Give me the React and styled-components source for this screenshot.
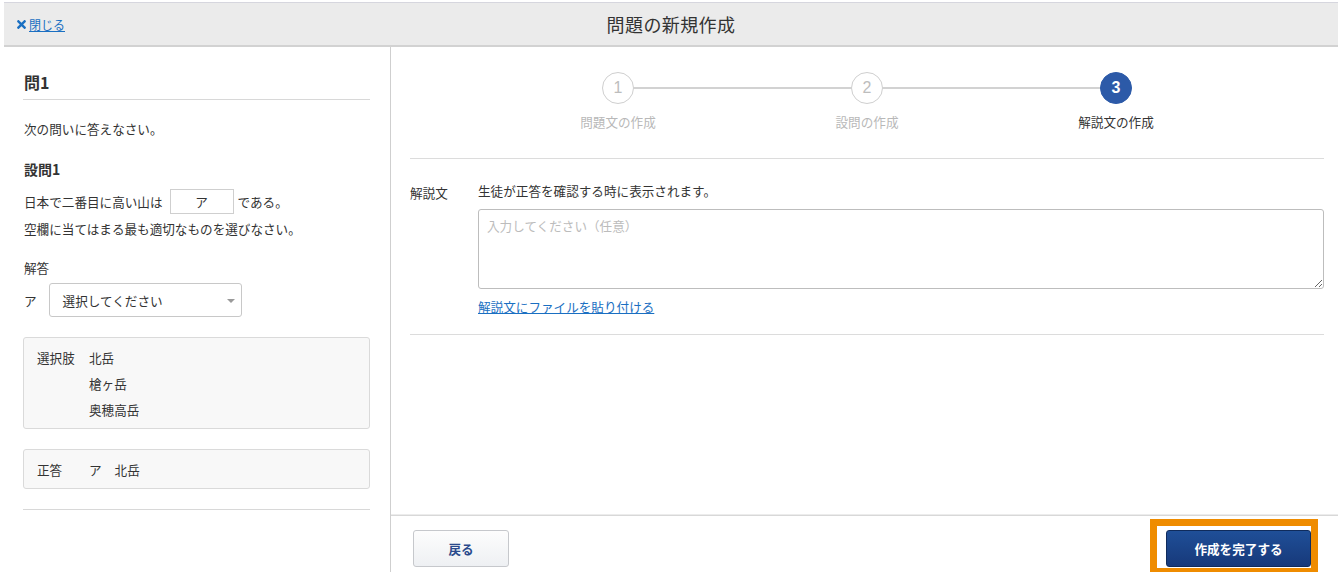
import React from "react";
import styled, { createGlobalStyle } from "styled-components";
import { FaTimes } from "react-icons/fa";

const GlobalStyle = createGlobalStyle`
  html, body {
    margin: 0;
    padding: 0;
    background: #fff;
  }
  body {
    font-family: "Noto Sans CJK JP", "Noto Sans", sans-serif;
    color: #333;
    font-size: 12.6px;
  }
`;

const Page = styled.div`
  padding: 2px 0 0 4px;
  width: 1338px;
  box-sizing: border-box;
`;

const Header = styled.header`
  display: grid;
  grid-template-columns: 1fr auto 1fr;
  align-items: center;
  height: 42px;
  background: #ebebeb;
  border-top: 1px solid #d6d6de;
  border-bottom: 2px solid #d2d2d2;
  padding: 0 12px;
`;

const CloseLink = styled.a`
  display: inline-flex;
  align-items: center;
  gap: 2px;
  color: #1a6fc2;
  font-size: 12px;
  text-decoration: underline;
  cursor: pointer;
  justify-self: start;

  svg {
    width: 11px;
    height: 13px;
  }
`;

const Title = styled.h1`
  margin: 0;
  font-size: 18px;
  font-weight: 400;
  color: #333;
  letter-spacing: 0.4px;
`;

const Main = styled.div`
  display: flex;
  height: 525px;
`;

const LeftPane = styled.aside`
  width: 347px;
  padding: 0 20px 0 19px;
  border-right: 1px solid #cfcfcf;
  flex-shrink: 0;
`;

const QTitle = styled.h2`
  margin: 23px 0 0;
  font-size: 16px;
  line-height: 24px;
  font-weight: 700;
  padding: 0 0 5px 1px;
  border-bottom: 1px solid #d8d8d8;
`;

const Text = styled.p`
  margin: ${(p) => p.$mt || 0}px 0 0 1px;
  line-height: 20px;
`;

const SubTitle = styled.h3`
  margin: 20px 0 0 1px;
  font-size: 14px;
  line-height: 20px;
  font-weight: 700;
`;

const QuestionLine = styled.div`
  display: flex;
  align-items: center;
  margin: 10px 0 0 1px;
  height: 25px;
`;

const Blank = styled.span`
  display: inline-flex;
  align-items: center;
  justify-content: center;
  width: 62px;
  height: 23px;
  border: 1px solid #cfcfcf;
  margin: 0 4px 0 7px;
`;

const SelectRow = styled.div`
  display: flex;
  align-items: center;
  margin: 5px 0 0 1px;
  gap: 12px;
`;

const SelectBox = styled.div`
  position: relative;
  height: 32px;
  width: 178px;
  border: 1px solid #c8c8c8;
  border-radius: 3px;
  display: flex;
  align-items: center;
  padding-left: 13px;

  &::after {
    content: "";
    position: absolute;
    right: 6px;
    top: 15px;
    border-left: 4px solid transparent;
    border-right: 4px solid transparent;
    border-top: 4px solid #9a9a9a;
  }
`;

const InfoBox = styled.div`
  margin-top: 20px;
  background: #f8f8f8;
  border: 1px solid #dadada;
  border-radius: 3px;
  padding: 7px 13px 5px;
`;

const InfoRow = styled.div`
  display: flex;
  line-height: 26px;
`;

const InfoLabel = styled.span`
  width: 52px;
  flex-shrink: 0;
`;

const InfoValue = styled.span`
  margin-right: ${(p) => p.$gap || 0}px;
`;

const Rule = styled.hr`
  margin: 20px 0 0;
  border: 0;
  border-top: 1px solid #d8d8d8;
`;

const RightPane = styled.section`
  flex: 1;
  display: flex;
  flex-direction: column;
`;

const Content = styled.div`
  flex: 1;
  padding: 0 14px 0 19px;
`;

const Stepper = styled.ol`
  list-style: none;
  margin: 0;
  padding: 25px 0 27px;
  display: grid;
  grid-template-columns: repeat(3, 249px);
  justify-content: center;
  border-bottom: 1px solid #dcdcdc;
`;

const Step = styled.li`
  position: relative;
  display: flex;
  flex-direction: column;
  align-items: center;
  gap: 9px;

  &:not(:last-child)::after {
    content: "";
    position: absolute;
    left: 50%;
    width: 100%;
    top: 15px;
    height: 2px;
    background: #d2d2d2;
  }
`;

const Circle = styled.span`
  position: relative;
  z-index: 1;
  width: 30px;
  height: 30px;
  border-radius: 50%;
  display: flex;
  align-items: center;
  justify-content: center;
  font-family: "Liberation Sans", Arial, sans-serif;
  font-size: 16px;
  font-weight: ${(p) => (p.$active ? 700 : 400)};
  background: ${(p) => (p.$active ? "#2c5aa8" : "#fff")};
  color: ${(p) => (p.$active ? "#fff" : "#bdbdbd")};
  border: 1px solid ${(p) => (p.$active ? "#2c5aa8" : "#cfcfcf")};
`;

const StepLabel = styled.span`
  line-height: 18px;
  color: ${(p) => (p.$active ? "#333" : "#b8b8b8")};
`;

const FormRow = styled.div`
  display: flex;
  padding: 23px 0 18px;
  border-bottom: 1px solid #dcdcdc;
`;

const FormLabel = styled.div`
  width: 68px;
  flex-shrink: 0;
  line-height: 18px;
  padding-top: 2px;
`;

const FormBody = styled.div`
  flex: 1;
  display: flex;
  flex-direction: column;
`;

const Hint = styled.div`
  line-height: 18px;
`;

const TextArea = styled.textarea`
  margin-top: 9px;
  height: 80px;
  box-sizing: border-box;
  border: 1px solid #bdbdbd;
  border-radius: 3px;
  padding: 6px 8px;
  font-family: inherit;
  font-size: 12.6px;
  color: #333;
  resize: vertical;

  &::placeholder {
    color: #bcbcbc;
  }
`;

const FileLink = styled.a`
  margin-top: 9px;
  line-height: 18px;
  color: #1a6fc2;
  text-decoration: underline;
  align-self: flex-start;
  cursor: pointer;
`;

const Footer = styled.footer`
  display: flex;
  justify-content: space-between;
  align-items: flex-start;
  height: 57px;
  box-sizing: border-box;
  padding: 14px 27px 0 22px;
  border-top: 1px solid #d8d8d8;
  box-shadow: 0 -1px 0 #ececec;
`;

const Button = styled.button`
  height: 37px;
  border-radius: 3px;
  font-family: inherit;
  font-size: 12.6px;
  font-weight: 700;
  cursor: pointer;
  background: ${(p) =>
    p.$primary
      ? "linear-gradient(#1f4f98, #17397a)"
      : "linear-gradient(#fdfdfd, #eef0f3)"};
  color: ${(p) => (p.$primary ? "#fff" : "#2a4a8c")};
  border: 1px solid ${(p) => (p.$primary ? "#0f2b5c" : "#c6c8cc")};
  width: ${(p) => (p.$primary ? 145 : 96)}px;
`;

const Highlight = styled.div`
  position: relative;

  &::after {
    content: "";
    position: absolute;
    top: -11px;
    right: -7px;
    bottom: -8px;
    left: -16px;
    border: 7px solid #ef8c00;
    pointer-events: none;
  }
`;

const steps = [
  { n: 1, label: "問題文の作成" },
  { n: 2, label: "設問の作成" },
  { n: 3, label: "解説文の作成", active: true },
];

const choices = ["北岳", "槍ヶ岳", "奥穂高岳"];

export default function App() {
  return (
    <Page>
      <GlobalStyle />
      <Header>
        <CloseLink>
          <FaTimes />
          閉じる
        </CloseLink>
        <Title>問題の新規作成</Title>
        <span />
      </Header>
      <Main>
        <LeftPane>
          <QTitle>問1</QTitle>
          <Text $mt={19}>次の問いに答えなさい。</Text>
          <SubTitle>設問1</SubTitle>
          <QuestionLine>
            日本で二番目に高い山は<Blank>ア</Blank>である。
          </QuestionLine>
          <Text $mt={5}>空欄に当てはまる最も適切なものを選びなさい。</Text>
          <Text $mt={19}>解答</Text>
          <SelectRow>
            <span>ア</span>
            <SelectBox>選択してください</SelectBox>
          </SelectRow>
          <InfoBox>
            {choices.map((c, i) => (
              <InfoRow key={c}>
                <InfoLabel>{i === 0 ? "選択肢" : ""}</InfoLabel>
                <InfoValue>{c}</InfoValue>
              </InfoRow>
            ))}
          </InfoBox>
          <InfoBox>
            <InfoRow>
              <InfoLabel>正答</InfoLabel>
              <InfoValue $gap={13}>ア</InfoValue>
              <InfoValue>北岳</InfoValue>
            </InfoRow>
          </InfoBox>
          <Rule />
        </LeftPane>
        <RightPane>
          <Content>
            <Stepper>
              {steps.map((s) => (
                <Step key={s.n}>
                  <Circle $active={s.active}>{s.n}</Circle>
                  <StepLabel $active={s.active}>{s.label}</StepLabel>
                </Step>
              ))}
            </Stepper>
            <FormRow>
              <FormLabel>解説文</FormLabel>
              <FormBody>
                <Hint>生徒が正答を確認する時に表示されます。</Hint>
                <TextArea placeholder="入力してください（任意）" />
                <FileLink>解説文にファイルを貼り付ける</FileLink>
              </FormBody>
            </FormRow>
          </Content>
          <Footer>
            <Button>戻る</Button>
            <Highlight>
              <Button $primary>作成を完了する</Button>
            </Highlight>
          </Footer>
        </RightPane>
      </Main>
    </Page>
  );
}
